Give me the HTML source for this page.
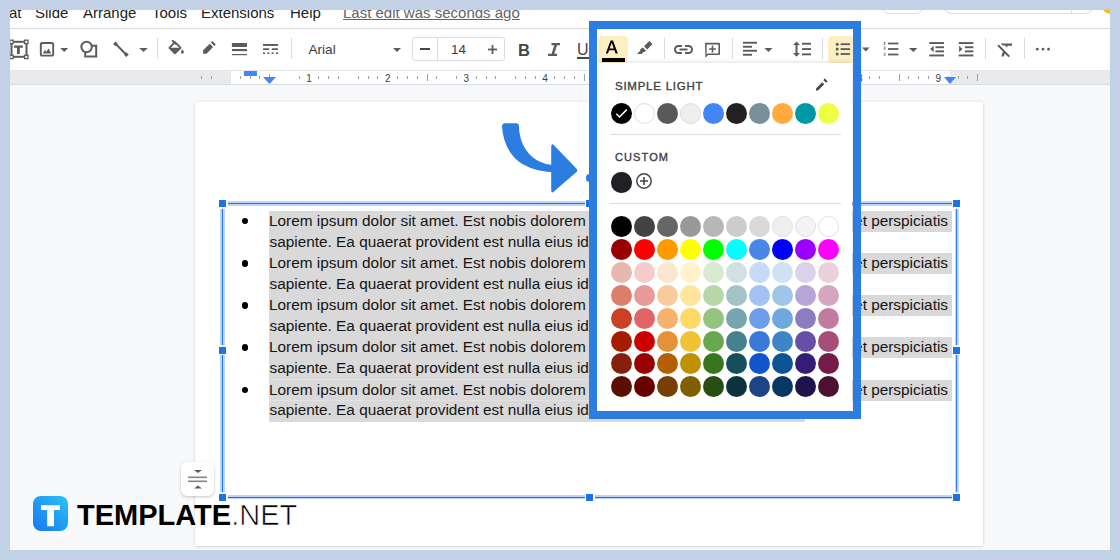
<!DOCTYPE html>
<html><head><meta charset="utf-8">
<style>
*{margin:0;padding:0;box-sizing:border-box}
html,body{width:1120px;height:560px;overflow:hidden;background:#f8f9fa;font-family:"Liberation Sans",sans-serif;position:relative}
div,svg,span{position:absolute}
.menu{font-size:15px;color:#202124;line-height:20px;white-space:nowrap;top:3px}
.sep{width:1px;height:21px;top:38px;background:#dadce0}
svg{overflow:visible}
.tx{font-size:15.36px;color:#141414;white-space:nowrap;line-height:21px;height:21px}
.hl{background:#d9d9d9;height:21px}
.bul{width:7px;height:7px;border-radius:50%;background:#000}
.hd{width:8px;height:8px;background:#1a73e8}
.sw{width:21px;height:21px;border-radius:50%}
.lab{font-size:12px;font-weight:normal;letter-spacing:0.75px;color:#3c4043;-webkit-text-stroke:0.35px #3c4043;white-space:nowrap;line-height:14px}
</style></head><body>

<div style="left:0;top:0;width:1120px;height:29px;background:#fff;border-bottom:1px solid #dadce0"></div>
<div style="left:0;top:29px;width:1120px;height:41px;background:#fff"></div>
<div style="left:0;top:70px;width:1120px;height:15px;background:#e8eaed;border-bottom:1px solid #dadce0"></div>
<div style="left:0;top:70px;width:1120px;height:1px;background:#e3e5e8"></div>
<div style="left:231px;top:71px;width:718.5px;height:13px;background:#fff"></div>
<div class="menu" style="left:-26px">Format</div>
<div class="menu" style="left:35px">Slide</div>
<div class="menu" style="left:83px">Arrange</div>
<div class="menu" style="left:152px">Tools</div>
<div class="menu" style="left:201px">Extensions</div>
<div class="menu" style="left:290px">Help</div>
<div class="menu" style="left:343px;color:#5f6368;text-decoration:underline">Last edit was seconds ago</div>
<div style="left:881px;top:-10px;width:43px;height:24px;border:1px solid #dadce0;border-radius:9px"></div>
<div style="left:943px;top:-10px;width:151px;height:24px;border:1px solid #dadce0;border-radius:9px"></div>
<div style="left:1071px;top:0;width:1px;height:14px;background:#dadce0"></div>
<div style="left:1100px;top:-10px;width:24px;height:24px;border-radius:50%;background:#fbbc04"></div>
<div class="sep" style="left:157px"></div>
<div class="sep" style="left:291px"></div>
<div class="sep" style="left:664px"></div>
<div class="sep" style="left:732px"></div>
<div class="sep" style="left:822px"></div>
<div class="sep" style="left:985px"></div>
<div class="sep" style="left:1024px"></div>
<svg style="left:0;top:0" width="1120" height="100" viewBox="0 0 1120 100" fill="#585c61">
<rect x="11.5" y="41.8" width="15" height="15" fill="none" stroke="#585c61" stroke-width="2"/>
<rect x="9.7" y="40.2" width="3.4" height="3.4" fill="#fff" stroke="#585c61" stroke-width="1.3"/>
<rect x="24.6" y="40.2" width="3.4" height="3.4" fill="#fff" stroke="#585c61" stroke-width="1.3"/>
<rect x="9.7" y="55.2" width="3.4" height="3.4" fill="#fff" stroke="#585c61" stroke-width="1.3"/>
<rect x="24.6" y="55.2" width="3.4" height="3.4" fill="#fff" stroke="#585c61" stroke-width="1.3"/>
<path d="M14 45.4h8.8v2.4h-3v6.2h-2.8v-6.2H14z"/>
<rect x="40.8" y="43" width="12.4" height="12.6" rx="1.6" fill="none" stroke="#585c61" stroke-width="1.9"/>
<path d="M42.8 53.6l2.2-3.6 1.4 1.8 2.2-3.2 2.6 5z"/>
<path d="M60.2 48h8l-4 4.1z"/>
<circle cx="86.6" cy="47" r="5.2" fill="none" stroke="#585c61" stroke-width="2"/>
<path d="M92.2 45.8h4v10.6H85.2v-3.4" fill="none" stroke="#585c61" stroke-width="2"/>
<path d="M115.5 43.8l10.7 10.7" stroke="#585c61" stroke-width="2" />
<rect x="113.8" y="42.2" width="3.4" height="3.4" transform="rotate(45 115.5 43.9)"/>
<rect x="124.6" y="52.9" width="3.4" height="3.4" transform="rotate(45 126.3 54.6)"/>
<path d="M139.2 48.1h8.6l-4.3 3.8z"/>
<path d="M172.6 40.8l3.2 3" stroke="#585c61" stroke-width="1.9" stroke-linecap="round"/>
<path d="M169.4 47.8L175 42.2l5.6 5.6L175 53.4z" fill="none" stroke="#585c61" stroke-width="1.8" stroke-linejoin="round"/>
<path d="M169.4 47.8h11.2L175 53.4z"/>
<path d="M182.4 49.2c-.3.6-1.5 2.2-1.5 3 0 .8.7 1.3 1.5 1.3s1.5-.5 1.5-1.3c0-.8-1.2-2.4-1.5-3z"/>
<path d="M203.1 53.7v-3.4l6.6-6.6 3.4 3.4-6.6 6.6z"/>
<path d="M210.9 42.5l1.5-1.5 3.4 3.4-1.5 1.5z"/>
<rect x="231.9" y="43" width="15.1" height="4"/>
<rect x="231.9" y="49" width="15.1" height="2.1"/>
<rect x="231.9" y="54" width="15.1" height="1.2"/>
<rect x="263" y="44" width="15" height="1.9"/>
<rect x="263" y="48.3" width="6.2" height="1.7"/><rect x="271.8" y="48.3" width="6.2" height="1.7"/>
<rect x="263" y="52.4" width="2" height="1.6"/><rect x="267.3" y="52.4" width="2" height="1.6"/><rect x="271.6" y="52.4" width="2" height="1.6"/><rect x="276" y="52.4" width="2" height="1.6"/>
</svg>
<div style="left:308.5px;top:41.5px;font-size:13.6px;color:#3c4043;line-height:16px">Arial</div>
<svg style="left:393px;top:48px" width="8" height="4" viewBox="0 0 8 4" fill="#585c61"><path d="M0 0h8L4 4z"/></svg>
<div style="left:412px;top:37px;width:93px;height:24px;border:1px solid #dadce0;border-radius:3px"></div>
<div style="left:437px;top:37px;width:1px;height:24px;background:#dadce0"></div>
<div style="left:420px;top:48px;width:10px;height:2px;background:#444746"></div>
<div style="left:451px;top:41.8px;font-size:13.5px;color:#3c4043;line-height:16px">14</div>
<svg style="left:488px;top:45px" width="9" height="9" viewBox="0 0 9 9" fill="#585c61"><rect x="3.6" y="0" width="1.8" height="9"/><rect x="0" y="3.6" width="9" height="1.8"/></svg>
<div style="left:518px;top:41.5px;font-size:16.5px;font-weight:bold;color:#444746;line-height:16px">B</div>
<svg style="left:548px;top:43px" width="12" height="13" viewBox="0 0 12 13" fill="#585c61"><path d="M3.5 0h8.5v2.2H9L6.3 10.8h2.7V13H0v-2.2h3.6L6.3 2.2H3.5z"/></svg>
<div style="left:577px;top:42px;font-size:16px;color:#444746;line-height:16px">U</div>
<div style="left:577px;top:57px;width:13px;height:1.6px;background:#444746"></div>
<div style="left:598px;top:36px;width:30px;height:26.5px;background:#feefc3;border-radius:4px"></div>
<div style="left:828px;top:36px;width:26px;height:26.5px;background:#feefc3;border-radius:4px"></div>
<svg style="left:0;top:0" width="1120" height="100" viewBox="0 0 1120 100" fill="#585c61">
<path d="M605.8 53.6L610.6 40.6h2.4l4.8 13h-2.2l-1.2-3.4h-5.3l-1.2 3.4zM609.6 48.4h4.1l-2-5.6z" fill="#000"/>
<rect x="602" y="58" width="23" height="4" fill="#000"/>
<path d="M644 46.2l5.3-5.3 3.2 3.2-5.3 5.3z"/>
<path d="M642.8 47.4l3.2 3.2-1.6 1.6-1 -.2-1.9 2H637l3.4-3.4-.2-1.4z"/>
<path d="M675.9 49.5c0-1.5 1.2-2.6 2.6-2.6h3.4V45h-3.4c-2.5 0-4.5 2-4.5 4.5s2 4.5 4.5 4.5h3.4v-1.9h-3.4c-1.4 0-2.6-1.2-2.6-2.6zM679.5 50.4h8v-1.8h-8zM688.5 45h-3.4v1.9h3.4c1.5 0 2.6 1.2 2.6 2.6s-1.2 2.6-2.6 2.6h-3.4V54h3.4c2.5 0 4.5-2 4.5-4.5S691 45 688.5 45z"/>
<path d="M705 43.9c0-.6.5-1.1 1.1-1.1h12.8c.6 0 1.1.5 1.1 1.1v10c0 .6-.5 1.1-1.1 1.1H708.2L705.4 57.8zM706.6 44.4v10.2l1.2-1.2h10.6v-9z"/>
<path d="M711.7 45.6h1.6v2.6h2.6v1.6h-2.6v2.6h-1.6v-2.6h-2.6v-1.6h2.6z"/>
<rect x="743" y="41.8" width="14" height="1.9"/><rect x="743" y="45.8" width="9" height="1.9"/><rect x="743" y="49.8" width="14" height="1.9"/><rect x="743" y="53.8" width="9" height="1.9"/>
<path d="M764.4 48h8.1l-4.05 3.9z"/>
<path d="M796.5 41.5l-3.5 3.5h2.5v8h-2.5l3.5 3.7 3.5-3.7h-2.5v-8h2.5z"/>
<rect x="802" y="42.8" width="9" height="1.9"/><rect x="802" y="48.1" width="9" height="1.9"/><rect x="802" y="53.4" width="9" height="1.9"/>
<circle cx="837.2" cy="44.2" r="1.5"/><circle cx="837.2" cy="49.1" r="1.5"/><circle cx="837.2" cy="54" r="1.5"/>
<rect x="840.6" y="43.3" width="9.4" height="1.8"/><rect x="840.6" y="48.2" width="9.4" height="1.8"/><rect x="840.6" y="53.1" width="9.4" height="1.8"/>
<path d="M862 47.6h7.5l-3.75 4z"/>
<path d="M884.2 42.1h1v3h-.9v-2.2h-.6z" />
<path d="M883.5 47.3c.2-.5.6-.7 1.1-.7.6 0 1 .3 1 .8 0 .4-.2.6-.6.9l-.5.5h1.1v.6h-2.1v-.5l1-1c.3-.3.3-.4.3-.5 0-.2-.1-.3-.3-.3s-.4.1-.5.3z"/>
<path d="M883.4 54.8c.2.4.5.5.9.5.4 0 .7-.2.7-.5s-.2-.4-.6-.4h-.3v-.5h.3c.3 0 .5-.2.5-.4s-.2-.3-.5-.3c-.3 0-.5.1-.6.4l-.5-.3c.2-.4.6-.6 1.1-.6.6 0 1.1.3 1.1.8 0 .3-.2.5-.5.6.3.1.6.3.6.7 0 .5-.5.9-1.2.9-.6 0-1-.2-1.3-.6z"/>
<rect x="888" y="42.6" width="10.4" height="1.8"/><rect x="888" y="48.1" width="10.4" height="1.8"/><rect x="888" y="53.6" width="10.4" height="1.8"/>
<path d="M909 48h8.5l-4.25 3.9z"/>
<rect x="929.3" y="42.1" width="14.7" height="1.9"/><rect x="935.5" y="46.3" width="8.5" height="1.9"/><rect x="935.5" y="50.4" width="8.5" height="1.9"/><rect x="929.3" y="54.5" width="14.7" height="1.9"/>
<path d="M933.6 45.8v6.4l-3.4-3.2z"/>
<rect x="958.7" y="42.1" width="14.7" height="1.9"/><rect x="964.9" y="46.3" width="8.5" height="1.9"/><rect x="964.9" y="50.4" width="8.5" height="1.9"/><rect x="958.7" y="54.5" width="14.7" height="1.9"/>
<path d="M959.1 45.8v6.4l3.4-3.2z"/>
<path d="M1000.5 43.4h11.5v2.3h-4.3l-.7 1.7-1.7-1.7.1-.1h-2.6z"/>
<path d="M998.8 44.6l-1.4 1.4 5.6 5.6-1.8 4.8h2.4l1.1-3 3.9 3.9 1.4-1.4z"/>
<circle cx="1037.3" cy="49.2" r="1.35"/><circle cx="1043" cy="49.2" r="1.35"/><circle cx="1048.6" cy="49.2" r="1.35"/>
</svg>
<div style="left:239.7px;top:75.5px;width:1px;height:3.5px;background:#9aa0a6"></div>
<div style="left:249.6px;top:75.5px;width:1px;height:3.5px;background:#9aa0a6"></div>
<div style="left:259.4px;top:75.5px;width:1px;height:3.5px;background:#9aa0a6"></div>
<div style="left:269.2px;top:74px;width:1px;height:7px;background:#9aa0a6"></div>
<div style="left:298.7px;top:75.5px;width:1px;height:3.5px;background:#9aa0a6"></div>
<div style="left:299.1px;top:72px;width:20px;text-align:center;font-size:10px;color:#3c4043;line-height:14px">1</div>
<div style="left:318.4px;top:75.5px;width:1px;height:3.5px;background:#9aa0a6"></div>
<div style="left:328.2px;top:75.5px;width:1px;height:3.5px;background:#9aa0a6"></div>
<div style="left:338.1px;top:75.5px;width:1px;height:3.5px;background:#9aa0a6"></div>
<div style="left:357.7px;top:75.5px;width:1px;height:3.5px;background:#9aa0a6"></div>
<div style="left:367.6px;top:75.5px;width:1px;height:3.5px;background:#9aa0a6"></div>
<div style="left:377.4px;top:75.5px;width:1px;height:3.5px;background:#9aa0a6"></div>
<div style="left:377.7px;top:72px;width:20px;text-align:center;font-size:10px;color:#3c4043;line-height:14px">2</div>
<div style="left:397.1px;top:75.5px;width:1px;height:3.5px;background:#9aa0a6"></div>
<div style="left:406.9px;top:75.5px;width:1px;height:3.5px;background:#9aa0a6"></div>
<div style="left:416.7px;top:75.5px;width:1px;height:3.5px;background:#9aa0a6"></div>
<div style="left:426.5px;top:74px;width:1px;height:7px;background:#9aa0a6"></div>
<div style="left:436.4px;top:75.5px;width:1px;height:3.5px;background:#9aa0a6"></div>
<div style="left:456.0px;top:75.5px;width:1px;height:3.5px;background:#9aa0a6"></div>
<div style="left:456.4px;top:72px;width:20px;text-align:center;font-size:10px;color:#3c4043;line-height:14px">3</div>
<div style="left:475.7px;top:75.5px;width:1px;height:3.5px;background:#9aa0a6"></div>
<div style="left:485.5px;top:75.5px;width:1px;height:3.5px;background:#9aa0a6"></div>
<div style="left:495.4px;top:75.5px;width:1px;height:3.5px;background:#9aa0a6"></div>
<div style="left:515.0px;top:75.5px;width:1px;height:3.5px;background:#9aa0a6"></div>
<div style="left:524.9px;top:75.5px;width:1px;height:3.5px;background:#9aa0a6"></div>
<div style="left:534.7px;top:75.5px;width:1px;height:3.5px;background:#9aa0a6"></div>
<div style="left:535.0px;top:72px;width:20px;text-align:center;font-size:10px;color:#3c4043;line-height:14px">4</div>
<div style="left:554.4px;top:75.5px;width:1px;height:3.5px;background:#9aa0a6"></div>
<div style="left:564.2px;top:75.5px;width:1px;height:3.5px;background:#9aa0a6"></div>
<div style="left:574.0px;top:75.5px;width:1px;height:3.5px;background:#9aa0a6"></div>
<div style="left:583.9px;top:74px;width:1px;height:7px;background:#9aa0a6"></div>
<div style="left:593.7px;top:75.5px;width:1px;height:3.5px;background:#9aa0a6"></div>
<div style="left:603.5px;top:75.5px;width:1px;height:3.5px;background:#9aa0a6"></div>
<div style="left:613.4px;top:75.5px;width:1px;height:3.5px;background:#9aa0a6"></div>
<div style="left:613.7px;top:72px;width:20px;text-align:center;font-size:10px;color:#3c4043;line-height:14px">5</div>
<div style="left:633.0px;top:75.5px;width:1px;height:3.5px;background:#9aa0a6"></div>
<div style="left:642.9px;top:75.5px;width:1px;height:3.5px;background:#9aa0a6"></div>
<div style="left:652.7px;top:75.5px;width:1px;height:3.5px;background:#9aa0a6"></div>
<div style="left:662.5px;top:74px;width:1px;height:7px;background:#9aa0a6"></div>
<div style="left:672.4px;top:75.5px;width:1px;height:3.5px;background:#9aa0a6"></div>
<div style="left:682.2px;top:75.5px;width:1px;height:3.5px;background:#9aa0a6"></div>
<div style="left:692.0px;top:75.5px;width:1px;height:3.5px;background:#9aa0a6"></div>
<div style="left:692.4px;top:72px;width:20px;text-align:center;font-size:10px;color:#3c4043;line-height:14px">6</div>
<div style="left:711.7px;top:75.5px;width:1px;height:3.5px;background:#9aa0a6"></div>
<div style="left:721.5px;top:75.5px;width:1px;height:3.5px;background:#9aa0a6"></div>
<div style="left:731.4px;top:75.5px;width:1px;height:3.5px;background:#9aa0a6"></div>
<div style="left:741.2px;top:74px;width:1px;height:7px;background:#9aa0a6"></div>
<div style="left:751.0px;top:75.5px;width:1px;height:3.5px;background:#9aa0a6"></div>
<div style="left:760.9px;top:75.5px;width:1px;height:3.5px;background:#9aa0a6"></div>
<div style="left:770.7px;top:75.5px;width:1px;height:3.5px;background:#9aa0a6"></div>
<div style="left:771.0px;top:72px;width:20px;text-align:center;font-size:10px;color:#3c4043;line-height:14px">7</div>
<div style="left:790.4px;top:75.5px;width:1px;height:3.5px;background:#9aa0a6"></div>
<div style="left:800.2px;top:75.5px;width:1px;height:3.5px;background:#9aa0a6"></div>
<div style="left:810.0px;top:75.5px;width:1px;height:3.5px;background:#9aa0a6"></div>
<div style="left:819.8px;top:74px;width:1px;height:7px;background:#9aa0a6"></div>
<div style="left:829.7px;top:75.5px;width:1px;height:3.5px;background:#9aa0a6"></div>
<div style="left:839.5px;top:75.5px;width:1px;height:3.5px;background:#9aa0a6"></div>
<div style="left:849.3px;top:75.5px;width:1px;height:3.5px;background:#9aa0a6"></div>
<div style="left:849.7px;top:72px;width:20px;text-align:center;font-size:10px;color:#3c4043;line-height:14px">8</div>
<div style="left:869.0px;top:75.5px;width:1px;height:3.5px;background:#9aa0a6"></div>
<div style="left:878.8px;top:75.5px;width:1px;height:3.5px;background:#9aa0a6"></div>
<div style="left:898.5px;top:74px;width:1px;height:7px;background:#9aa0a6"></div>
<div style="left:908.3px;top:75.5px;width:1px;height:3.5px;background:#9aa0a6"></div>
<div style="left:918.2px;top:75.5px;width:1px;height:3.5px;background:#9aa0a6"></div>
<div style="left:928.0px;top:75.5px;width:1px;height:3.5px;background:#9aa0a6"></div>
<div style="left:928.3px;top:72px;width:20px;text-align:center;font-size:10px;color:#3c4043;line-height:14px">9</div>
<div style="left:947.7px;top:75.5px;width:1px;height:3.5px;background:#9aa0a6"></div>
<div style="left:957.5px;top:75.5px;width:1px;height:3.5px;background:#9aa0a6"></div>
<div style="left:967.3px;top:75.5px;width:1px;height:3.5px;background:#9aa0a6"></div>
<div style="left:977.2px;top:74px;width:1px;height:7px;background:#9aa0a6"></div>
<div style="left:201px;top:75.5px;width:1px;height:3.5px;background:#9aa0a6"></div>
<div style="left:210.5px;top:75.5px;width:1px;height:3.5px;background:#9aa0a6"></div>
<div style="left:244px;top:71px;width:13px;height:5px;background:#4285f4"></div>
<svg style="left:263px;top:77px" width="13" height="7" viewBox="0 0 13 7" fill="#4285f4"><path d="M0 0h13L6.5 7z"/></svg>
<svg style="left:943.5px;top:77px" width="12" height="7" viewBox="0 0 12 7" fill="#4285f4"><path d="M0 0h12L6 7z"/></svg>
<div style="left:195px;top:102px;width:788px;height:444px;background:#fff;box-shadow:0 0 3px rgba(60,64,67,0.13),0 1px 2px rgba(60,64,67,0.12)"></div>
<div class="hl" style="left:269px;top:211.0px;width:536px;height:210.80px"></div>
<div style="left:269px;top:379.0px;width:536px;height:1px;background:#e2e2e2"></div>
<div style="left:269px;top:400.0px;width:536px;height:1px;background:#e2e2e2"></div>
<div class="hl" style="left:805px;top:211.00px;width:147px"></div>
<div class="bul" style="left:241.8px;top:218.00px;width:6.4px;height:6.4px"></div>
<div class="tx" style="left:269px;top:210.00px">Lorem ipsum dolor sit amet. Est nobis dolorem et quia dolor et perspiciatis</div>
<div class="tx" style="left:269.5px;top:230.58px">sapiente. Ea quaerat provident est nulla eius id aut nulla iste dolor</div>
<div class="hl" style="left:805px;top:253.16px;width:147px"></div>
<div class="bul" style="left:241.8px;top:260.16px;width:6.4px;height:6.4px"></div>
<div class="tx" style="left:269px;top:252.16px">Lorem ipsum dolor sit amet. Est nobis dolorem et quia dolor et perspiciatis</div>
<div class="tx" style="left:269.5px;top:272.74px">sapiente. Ea quaerat provident est nulla eius id aut nulla iste dolor</div>
<div class="hl" style="left:805px;top:295.32px;width:147px"></div>
<div class="bul" style="left:241.8px;top:302.32px;width:6.4px;height:6.4px"></div>
<div class="tx" style="left:269px;top:294.32px">Lorem ipsum dolor sit amet. Est nobis dolorem et quia dolor et perspiciatis</div>
<div class="tx" style="left:269.5px;top:314.90px">sapiente. Ea quaerat provident est nulla eius id aut nulla iste dolor</div>
<div class="hl" style="left:805px;top:337.48px;width:147px"></div>
<div class="bul" style="left:241.8px;top:344.48px;width:6.4px;height:6.4px"></div>
<div class="tx" style="left:269px;top:336.48px">Lorem ipsum dolor sit amet. Est nobis dolorem et quia dolor et perspiciatis</div>
<div class="tx" style="left:269.5px;top:357.06px">sapiente. Ea quaerat provident est nulla eius id aut nulla iste dolor</div>
<div class="hl" style="left:805px;top:379.64px;width:147px"></div>
<div class="bul" style="left:241.8px;top:386.64px;width:6.4px;height:6.4px"></div>
<div class="tx" style="left:269px;top:378.64px">Lorem ipsum dolor sit amet. Est nobis dolorem et quia dolor et perspiciatis</div>
<div class="tx" style="left:269.5px;top:399.22px">sapiente. Ea quaerat provident est nulla eius id aut nulla iste dolor</div>
<div class="tx" style="left:700px;top:210.00px;width:248px;text-align:right">dolor et perspiciatis</div>
<div class="tx" style="left:700px;top:252.16px;width:248px;text-align:right">dolor et perspiciatis</div>
<div class="tx" style="left:700px;top:294.32px;width:248px;text-align:right">dolor et perspiciatis</div>
<div class="tx" style="left:700px;top:336.48px;width:248px;text-align:right">dolor et perspiciatis</div>
<div class="tx" style="left:700px;top:378.64px;width:248px;text-align:right">dolor et perspiciatis</div>
<div style="left:33px;top:496px;width:35px;height:35px;border-radius:8px;background:linear-gradient(45deg,#1877ee,#2ac2f7)"></div>
<svg style="left:33px;top:496px" width="35" height="35" viewBox="0 0 35 35" fill="#fff"><path d="M8 9.2h19v4.9h-6v16.1h-6.8V14.1H8z"/></svg>
<div style="left:77px;top:497.5px;font-size:29px;font-weight:bold;color:#000;line-height:34px;white-space:nowrap">TEMPLATE<span style="position:static;font-weight:normal;-webkit-text-stroke:0.7px #fff">.NET</span></div>
<div style="left:220.4px;top:201.0px;width:738.2px;height:4.5px;background:#bfd5f8"></div>
<div style="left:220.4px;top:495.0px;width:738.2px;height:4px;background:#bfd5f8"></div>
<div style="left:220.0px;top:203.5px;width:4.8px;height:294.0px;background:#bfd5f8"></div>
<div style="left:955.0px;top:203.5px;width:3.6px;height:294.0px;background:#bfd5f8"></div>
<div style="left:222.4px;top:202.8px;width:734.2px;height:1.4px;background:#1a73e8"></div>
<div style="left:222.4px;top:496.8px;width:734.2px;height:1.4px;background:#1a73e8"></div>
<div style="left:221.7px;top:203.5px;width:1.4px;height:294.0px;background:#1a73e8"></div>
<div style="left:955.7px;top:203.5px;width:1.8px;height:294.0px;background:#2c7ef0"></div>
<div style="left:217.5px;top:198.5px;width:10px;height:10px;background:#fff"></div>
<div class="hd" style="left:219.0px;top:200.0px;width:7px;height:7px"></div>
<div style="left:584.5px;top:198.5px;width:10px;height:10px;background:#fff"></div>
<div class="hd" style="left:586.0px;top:200.0px;width:7px;height:7px"></div>
<div style="left:951.5px;top:198.5px;width:10px;height:10px;background:#fff"></div>
<div class="hd" style="left:953.0px;top:200.0px;width:7px;height:7px"></div>
<div style="left:217.5px;top:345.0px;width:10px;height:10px;background:#fff"></div>
<div class="hd" style="left:219.0px;top:346.5px;width:7px;height:7px"></div>
<div style="left:951.5px;top:345.0px;width:10px;height:10px;background:#fff"></div>
<div class="hd" style="left:953.0px;top:346.5px;width:7px;height:7px"></div>
<div style="left:217.5px;top:492.2px;width:10px;height:10px;background:#fff"></div>
<div class="hd" style="left:219.0px;top:493.7px;width:7px;height:7px"></div>
<div style="left:584.5px;top:492.2px;width:10px;height:10px;background:#fff"></div>
<div class="hd" style="left:586.0px;top:493.7px;width:7px;height:7px"></div>
<div style="left:951.5px;top:492.2px;width:10px;height:10px;background:#fff"></div>
<div class="hd" style="left:953.0px;top:493.7px;width:7px;height:7px"></div>
<div style="left:181px;top:462px;width:33px;height:34px;background:#fff;border-radius:6px;box-shadow:0 1px 3px rgba(60,64,67,0.3)"></div>
<svg style="left:188px;top:470px" width="19" height="19" viewBox="0 0 19 19" fill="#585c61"><path d="M6 0h8l-4 3z"/><rect x="0" y="6.5" width="19" height="1.6" fill="#80868b"/><rect x="0" y="10.5" width="19" height="1.6" fill="#80868b"/><path d="M6 18.5h8l-4-3z"/></svg>
<svg style="left:0;top:0" width="1120" height="560" viewBox="0 0 1120 560"><path fill="#2b7de2" d="M505 123.3H516Q519 123.3 519 126.5C519.3 138 523 149 533 157.5C538 161.5 544 164 551.2 164.8V147Q551.2 142.5 554.2 145.6L576.3 168.4Q578.2 170.4 576.3 172.3L554.2 191.2Q551.2 194.2 551.2 189.8V172C540 171.5 527 168 518 161C508 152.5 503 140 502 127Q502 123.3 505 123.3Z"/></svg>
<div style="left:597px;top:63px;width:255px;height:348px;background:#fff;box-shadow:0 -1px 4px rgba(60,64,67,0.16)"></div>
<div class="lab" style="left:615px;top:79px;font-size:11.5px">SIMPLE LIGHT</div>
<svg style="left:814px;top:76px" width="16" height="16" viewBox="0 0 16 16" fill="#444746"><path d="M2 12.5l6.2-6.2 2 2L4 14.5H2z"/><path d="M10.5 2.2l3.3 3.3-2 1L9.5 4.2z"/></svg>
<div class="sw" style="left:610.90px;top:102.70px;background:#000000;"></div>
<div class="sw" style="left:633.90px;top:102.70px;background:#ffffff;border:1px solid #dadce0;"></div>
<div class="sw" style="left:656.90px;top:102.70px;background:#595959;"></div>
<div class="sw" style="left:679.90px;top:102.70px;background:#eeeeee;border:1px solid #dadce0;"></div>
<div class="sw" style="left:702.90px;top:102.70px;background:#4285f4;"></div>
<div class="sw" style="left:725.90px;top:102.70px;background:#212121;"></div>
<div class="sw" style="left:748.90px;top:102.70px;background:#78909c;"></div>
<div class="sw" style="left:771.90px;top:102.70px;background:#ffab40;"></div>
<div class="sw" style="left:794.90px;top:102.70px;background:#0097a7;"></div>
<div class="sw" style="left:817.90px;top:102.70px;background:#eeff41;"></div>
<svg style="left:615px;top:107px" width="13" height="12" viewBox="0 0 13 12"><path d="M1.3 6.8l3.2 3.2L11.8 2.6" fill="none" stroke="#fff" stroke-width="1.5"/></svg>
<div style="left:610px;top:134px;width:231px;height:1px;background:#dadce0"></div>
<div class="lab" style="left:615px;top:149.5px;font-size:11px;letter-spacing:1.1px">CUSTOM</div>
<div class="sw" style="left:610.9px;top:171.7px;background:#202124;box-shadow:0 0 1px rgba(0,0,0,0.4)"></div>
<svg style="left:636px;top:173px" width="16" height="16" viewBox="0 0 16 16"><circle cx="8" cy="8" r="7.2" fill="none" stroke="#444746" stroke-width="1.5"/><path d="M8 4v8M4 8h8" stroke="#444746" stroke-width="1.6"/></svg>
<div style="left:610px;top:203px;width:231px;height:1px;background:#dadce0"></div>
<div class="sw" style="left:610.90px;top:215.80px;background:#000000;"></div>
<div class="sw" style="left:633.90px;top:215.80px;background:#434343;"></div>
<div class="sw" style="left:656.90px;top:215.80px;background:#666666;"></div>
<div class="sw" style="left:679.90px;top:215.80px;background:#999999;"></div>
<div class="sw" style="left:702.90px;top:215.80px;background:#b7b7b7;"></div>
<div class="sw" style="left:725.90px;top:215.80px;background:#cccccc;"></div>
<div class="sw" style="left:748.90px;top:215.80px;background:#d9d9d9;"></div>
<div class="sw" style="left:771.90px;top:215.80px;background:#efefef;border:1px solid #e0e0e0;"></div>
<div class="sw" style="left:794.90px;top:215.80px;background:#f3f3f3;border:1px solid #e0e0e0;"></div>
<div class="sw" style="left:817.90px;top:215.80px;background:#ffffff;border:1px solid #e0e0e0;"></div>
<div class="sw" style="left:610.90px;top:238.74px;background:#980000;"></div>
<div class="sw" style="left:633.90px;top:238.74px;background:#ff0000;"></div>
<div class="sw" style="left:656.90px;top:238.74px;background:#ff9900;"></div>
<div class="sw" style="left:679.90px;top:238.74px;background:#ffff00;"></div>
<div class="sw" style="left:702.90px;top:238.74px;background:#00ff00;"></div>
<div class="sw" style="left:725.90px;top:238.74px;background:#00ffff;"></div>
<div class="sw" style="left:748.90px;top:238.74px;background:#4a86e8;"></div>
<div class="sw" style="left:771.90px;top:238.74px;background:#0000ff;"></div>
<div class="sw" style="left:794.90px;top:238.74px;background:#9900ff;"></div>
<div class="sw" style="left:817.90px;top:238.74px;background:#ff00ff;"></div>
<div class="sw" style="left:610.90px;top:261.68px;background:#e6b8af;"></div>
<div class="sw" style="left:633.90px;top:261.68px;background:#f4cccc;"></div>
<div class="sw" style="left:656.90px;top:261.68px;background:#fce5cd;"></div>
<div class="sw" style="left:679.90px;top:261.68px;background:#fff2cc;"></div>
<div class="sw" style="left:702.90px;top:261.68px;background:#d9ead3;"></div>
<div class="sw" style="left:725.90px;top:261.68px;background:#d0e0e3;"></div>
<div class="sw" style="left:748.90px;top:261.68px;background:#c9daf8;"></div>
<div class="sw" style="left:771.90px;top:261.68px;background:#cfe2f3;"></div>
<div class="sw" style="left:794.90px;top:261.68px;background:#d9d2e9;"></div>
<div class="sw" style="left:817.90px;top:261.68px;background:#ead1dc;"></div>
<div class="sw" style="left:610.90px;top:284.62px;background:#dd7e6b;"></div>
<div class="sw" style="left:633.90px;top:284.62px;background:#ea9999;"></div>
<div class="sw" style="left:656.90px;top:284.62px;background:#f9cb9c;"></div>
<div class="sw" style="left:679.90px;top:284.62px;background:#ffe599;"></div>
<div class="sw" style="left:702.90px;top:284.62px;background:#b6d7a8;"></div>
<div class="sw" style="left:725.90px;top:284.62px;background:#a2c4c9;"></div>
<div class="sw" style="left:748.90px;top:284.62px;background:#a4c2f4;"></div>
<div class="sw" style="left:771.90px;top:284.62px;background:#9fc5e8;"></div>
<div class="sw" style="left:794.90px;top:284.62px;background:#b4a7d6;"></div>
<div class="sw" style="left:817.90px;top:284.62px;background:#d5a6bd;"></div>
<div class="sw" style="left:610.90px;top:307.56px;background:#cc4125;"></div>
<div class="sw" style="left:633.90px;top:307.56px;background:#e06666;"></div>
<div class="sw" style="left:656.90px;top:307.56px;background:#f6b26b;"></div>
<div class="sw" style="left:679.90px;top:307.56px;background:#ffd966;"></div>
<div class="sw" style="left:702.90px;top:307.56px;background:#93c47d;"></div>
<div class="sw" style="left:725.90px;top:307.56px;background:#76a5af;"></div>
<div class="sw" style="left:748.90px;top:307.56px;background:#6d9eeb;"></div>
<div class="sw" style="left:771.90px;top:307.56px;background:#6fa8dc;"></div>
<div class="sw" style="left:794.90px;top:307.56px;background:#8e7cc3;"></div>
<div class="sw" style="left:817.90px;top:307.56px;background:#c27ba0;"></div>
<div class="sw" style="left:610.90px;top:330.50px;background:#a61c00;"></div>
<div class="sw" style="left:633.90px;top:330.50px;background:#cc0000;"></div>
<div class="sw" style="left:656.90px;top:330.50px;background:#e69138;"></div>
<div class="sw" style="left:679.90px;top:330.50px;background:#f1c232;"></div>
<div class="sw" style="left:702.90px;top:330.50px;background:#6aa84f;"></div>
<div class="sw" style="left:725.90px;top:330.50px;background:#45818e;"></div>
<div class="sw" style="left:748.90px;top:330.50px;background:#3c78d8;"></div>
<div class="sw" style="left:771.90px;top:330.50px;background:#3d85c6;"></div>
<div class="sw" style="left:794.90px;top:330.50px;background:#674ea7;"></div>
<div class="sw" style="left:817.90px;top:330.50px;background:#a64d79;"></div>
<div class="sw" style="left:610.90px;top:353.44px;background:#85200c;"></div>
<div class="sw" style="left:633.90px;top:353.44px;background:#990000;"></div>
<div class="sw" style="left:656.90px;top:353.44px;background:#b45f06;"></div>
<div class="sw" style="left:679.90px;top:353.44px;background:#bf9000;"></div>
<div class="sw" style="left:702.90px;top:353.44px;background:#38761d;"></div>
<div class="sw" style="left:725.90px;top:353.44px;background:#134f5c;"></div>
<div class="sw" style="left:748.90px;top:353.44px;background:#1155cc;"></div>
<div class="sw" style="left:771.90px;top:353.44px;background:#0b5394;"></div>
<div class="sw" style="left:794.90px;top:353.44px;background:#351c75;"></div>
<div class="sw" style="left:817.90px;top:353.44px;background:#741b47;"></div>
<div class="sw" style="left:610.90px;top:376.38px;background:#5b0f00;"></div>
<div class="sw" style="left:633.90px;top:376.38px;background:#660000;"></div>
<div class="sw" style="left:656.90px;top:376.38px;background:#783f04;"></div>
<div class="sw" style="left:679.90px;top:376.38px;background:#7f6000;"></div>
<div class="sw" style="left:702.90px;top:376.38px;background:#274e13;"></div>
<div class="sw" style="left:725.90px;top:376.38px;background:#0c343d;"></div>
<div class="sw" style="left:748.90px;top:376.38px;background:#1c4587;"></div>
<div class="sw" style="left:771.90px;top:376.38px;background:#073763;"></div>
<div class="sw" style="left:794.90px;top:376.38px;background:#20124d;"></div>
<div class="sw" style="left:817.90px;top:376.38px;background:#4c1130;"></div>
<div style="left:589px;top:21px;width:272px;height:398px;border:8px solid #2b7de2"></div>
<div style="left:586px;top:174px;width:7px;height:7.5px;border-radius:50%;background:#2b7de2"></div>
<div style="left:0;top:0;width:1120px;height:560px;border:10px solid #c3d1e7;border-right-width:10px"></div>
</body></html>
